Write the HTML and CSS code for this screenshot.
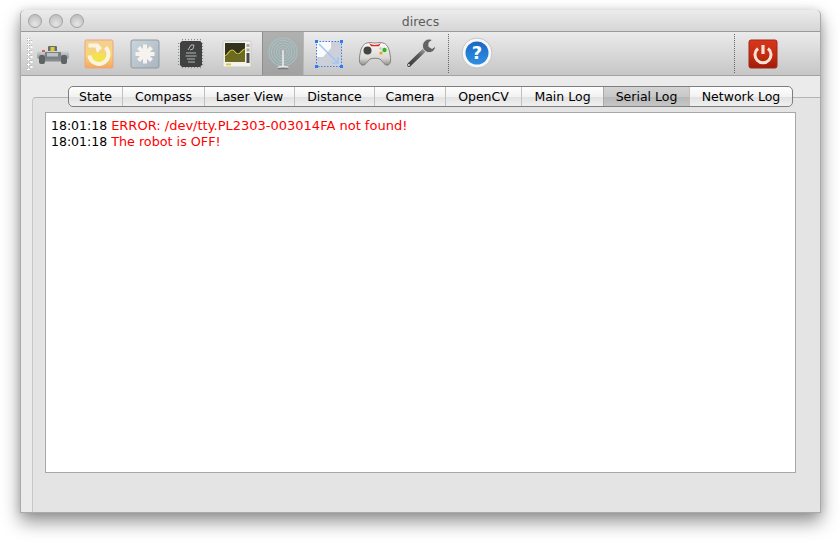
FILE: index.html
```html
<!DOCTYPE html>
<html lang="en">
<head>
<meta charset="utf-8">
<title>direcs</title>
<link rel="stylesheet" href="styles.css">
</head>
<body>
<div class="window">
  <header class="titlebar">
    <div class="lights"><span class="light"></span><span class="light"></span><span class="light"></span></div>
    <div class="title">direcs</div>
  </header>
  <div class="toolbar">
    <div class="grip"></div>
    <div class="tool">
      <svg width="34" height="24" viewBox="0 0 34 24"><defs><linearGradient id="rb" x1="0" y1="0" x2="0" y2="1"><stop offset="0" stop-color="#d4d8db"/><stop offset="1" stop-color="#8b9195"/></linearGradient></defs>
        <rect x="12" y="4" width="9" height="6" rx="1" fill="#6a6d6f"/><rect x="14.500" y="5" width="4" height="4" fill="#e3c92e"/>
        <rect x="1" y="9" width="32" height="8" rx="2" fill="url(#rb)"/><rect x="9" y="10" width="16" height="7" fill="#7c8185"/><rect x="11" y="11" width="11" height="3.500" fill="#bcc1c4"/>
        <rect x="3" y="13" width="6" height="9" rx="2" fill="#5f6366"/><rect x="25" y="13" width="6" height="9" rx="2" fill="#5f6366"/>
        <rect x="6" y="8" width="3" height="2" fill="#d9604a"/><rect x="9" y="17" width="16" height="2.500" fill="#868b8f"/></svg>
    </div>
    <div class="tool">
      <svg width="30" height="30" viewBox="0 0 30 30"><defs><linearGradient id="or" x1="0" y1="0" x2="0" y2="1"><stop offset="0" stop-color="#f4cf96"/><stop offset=".55" stop-color="#f5d672"/><stop offset="1" stop-color="#f4a860"/></linearGradient></defs>
        <rect x="1" y="1" width="28" height="28" rx="1.500" fill="url(#or)" stroke="#eba583"/>
        <ellipse cx="14" cy="20" rx="9" ry="6" fill="#f3e44e"/>
        <path d="M21.500 8.500a9.500 9.500 0 1 1-16 8" fill="none" stroke="#fbf4e2" stroke-width="4"/>
        <path d="M4.500 4.500h9.500l4 4.500-5 5-1.500-5.500H4.500z" fill="#fbf4e2"/></svg>
    </div>
    <div class="tool">
      <svg width="30" height="30" viewBox="0 0 30 30"><defs><linearGradient id="bl" x1="0" y1="0" x2="1" y2="1"><stop offset="0" stop-color="#cbd5dc"/><stop offset="1" stop-color="#a9b5bf"/></linearGradient></defs>
        <rect x="1" y="1" width="28" height="28" rx="2" fill="url(#bl)" stroke="#8f9aa3"/>
        <g stroke="#f6f3ee" stroke-width="4"><path d="M15 5.500v19M5.500 15h19M8.500 8.500l13 13M21.500 8.500l-13 13"/></g><circle cx="15" cy="15" r="4" fill="#f6f3ee"/></svg>
    </div>
    <div class="tool">
      <svg width="28" height="32" viewBox="0 0 28 32"><g stroke="#8c8c8c" stroke-width="1" stroke-dasharray="1.200 .8"><path d="M1 5.500h26M1 8.500h26M1 11.500h26M1 14.500h26M1 17.500h26M1 20.500h26M1 23.500h26M1 26.500h26"/><path d="M5.500 1v30M8.500 1v30M11.500 1v30M14.500 1v30M17.500 1v30M20.500 1v30M23.500 1v30"/></g>
        <path d="M5 3h18l2 2v22l-2 2H5l-2-2V5z" fill="#3f4241"/>
        <g fill="none" stroke="#c4c4c4" stroke-width=".9"><path d="M11 12l3-5h3l-1 4-3 1M9 15h10M8.500 18h11M10 21h8M11 24h7"/></g></svg>
    </div>
    <div class="tool">
      <svg width="30" height="28" viewBox="0 0 30 28"><rect x="1" y="1" width="28" height="26" rx="1.500" fill="#f3f2ec" stroke="#c9c9c5"/>
        <rect x="3" y="3" width="20" height="19" fill="#34321c"/><path d="M3 17c3-1 4-6 7-6s3 4 6 4 3-4 7-5v12H3z" fill="#6d6a22"/><path d="M3 16c3-1 4-6 7-6s3 4 6 4 3-4 7-5" fill="none" stroke="#d4cd3c" stroke-width="1.100"/>
        <rect x="24.500" y="4" width="3" height="3" fill="#a8a8a4"/><rect x="24.500" y="8.500" width="3" height="3" fill="#a8a8a4"/><rect x="24.500" y="13" width="3" height="10" fill="#4a4a48"/><rect x="4" y="23.500" width="5" height="1.800" fill="#d8c92e"/></svg>
    </div>
    <div class="tool active">
      <svg width="32" height="34" viewBox="0 0 32 34"><g fill="none" stroke="#9ecdd0" stroke-width="1.100" opacity=".75"><circle cx="16" cy="15" r="14"/><circle cx="16" cy="15" r="11.500"/><circle cx="16" cy="15" r="9"/><circle cx="16" cy="15" r="6.500"/><circle cx="16" cy="15" r="4"/></g>
        <path d="M15.200 13h1.600v17h-1.600z" fill="#ececec"/><ellipse cx="16" cy="30.500" rx="5.500" ry="1.800" fill="#e9e9e9"/><ellipse cx="16" cy="31.500" rx="5.500" ry="1" fill="#7a7a7a"/></svg>
    </div>
    <div class="tool">
      <svg width="30" height="30" viewBox="0 0 30 30"><rect x="2.500" y="2.500" width="25" height="25" fill="#cdd0d8"/><path d="M2.500 2.500H17V9L9 18H2.500z" fill="#fafafa"/><rect x="2.500" y="2.500" width="25" height="25" fill="none" stroke="#3d7fe0" stroke-dasharray="1.500 1.500"/><path d="M5 5l19 19M24 18v6h-6" fill="none" stroke="#9fc4f5" stroke-width="1.500"/>
        <g fill="#2c7df0"><rect x="1" y="1" width="3" height="3"/><rect x="26" y="1" width="3" height="3"/><rect x="1" y="26" width="3" height="3"/><rect x="26" y="26" width="3" height="3"/></g></svg>
    </div>
    <div class="tool">
      <svg width="34" height="26" viewBox="0 0 34 26"><defs><linearGradient id="gp" x1="0" y1="0" x2="0" y2="1"><stop offset="0" stop-color="#fbfbf9"/><stop offset=".7" stop-color="#d8d7d3"/><stop offset="1" stop-color="#8f8e8a"/></linearGradient></defs>
        <path d="M9 2c3-1 5 0 8 0s5-1 8 0c4 1 6 5 7 11 1 5 1 10-2 11-3 1-5-3-8-6-2-1-8-1-10 0-3 3-5 7-8 6-3-1-3-6-2-11C3 7 5 3 9 2z" fill="url(#gp)" stroke="#6f6e6a" stroke-width=".8"/>
        <path d="M11 1.800c3 3 9 3 12 0l-2 3.500h-8z" fill="#e0281f"/><circle cx="9.500" cy="9.500" r="4" fill="#444"/><circle cx="23" cy="12" r="1.600" fill="#e2a42c"/><circle cx="26.500" cy="9" r="2.200" fill="#2cb81f"/><circle cx="22.500" cy="7.500" r="1.300" fill="#c9c9c5"/></svg>
    </div>
    <div class="tool">
      <svg width="34" height="34" viewBox="0 0 34 34"><defs><linearGradient id="wr" x1="0" y1="1" x2="1" y2="0"><stop offset="0" stop-color="#3f3f3f"/><stop offset=".6" stop-color="#5a5a5a"/><stop offset="1" stop-color="#a8a8a8"/></linearGradient></defs>
        <path d="M21.500 12 5 28" stroke="#e6e6e6" stroke-width="5.200" stroke-linecap="round" fill="none"/><path d="M21.500 12 5 28" stroke="url(#wr)" stroke-width="4" stroke-linecap="round" fill="none"/><circle cx="4.800" cy="28" r="1.100" fill="#ddd"/>
        <path d="M25 2c-4 .5-6.500 3.500-6.500 7 0 1.500.5 3 2 4.500 2 2 4 2.500 6 2 3-.7 5-3 5.200-6.500l-3.700 2.500-3.200-2 .2-4 3.500-2.500C27 2.300 26 1.900 25 2z" fill="#636363" stroke="#e2e2e2" stroke-width=".9"/></svg>
    </div>
    <div class="sep first"></div>
    <div class="tool help">
      <svg width="32" height="33" viewBox="0 0 32 33"><defs><linearGradient id="hb" x1="0" y1="0" x2="0" y2="1"><stop offset="0" stop-color="#1a68c4"/><stop offset="1" stop-color="#2e8fe4"/></linearGradient></defs>
        <circle cx="16" cy="16" r="15" fill="#f7f7f7" stroke="#c4c4c4"/><circle cx="16" cy="16" r="11.500" fill="url(#hb)"/>
        <text x="16" y="22" class="q">?</text></svg>
    </div>
    <div class="spring"></div>
    <div class="sep"></div>
    <div class="tool power">
      <svg width="30" height="30" viewBox="0 0 30 30"><defs><linearGradient id="pw" x1="0" y1="0" x2="0" y2="1"><stop offset="0" stop-color="#d8361c"/><stop offset=".55" stop-color="#c42c10"/><stop offset="1" stop-color="#a01c08"/></linearGradient></defs>
        <rect x="1" y="1" width="28" height="28" rx="2" fill="url(#pw)" stroke="#9c2a1c"/><path d="M10 9.500a8 8 0 1 0 10 0" fill="none" stroke="#f4e4d8" stroke-width="3"/><path d="M15 6v9" stroke="#f4e4d8" stroke-width="3.200"/></svg>
    </div>
  </div>
  <main class="content">
    <section class="frame">
      <nav class="tabs">
        <span class="tab w-state">State</span>
        <span class="tab w-compass">Compass</span>
        <span class="tab w-laser">Laser View</span>
        <span class="tab w-distance">Distance</span>
        <span class="tab w-camera">Camera</span>
        <span class="tab w-opencv">OpenCV</span>
        <span class="tab w-main">Main Log</span>
        <span class="tab w-serial selected">Serial Log</span>
        <span class="tab w-network">Network Log</span>
      </nav>
      <div class="log">
        <div>18:01:18 <span class="err">ERROR: /dev/tty.PL2303-003014FA not found!</span></div>
        <div>18:01:18 <span class="err off">The robot is OFF!</span></div>
      </div>
    </section>
  </main>
</div>
</body>
</html>
```
FILE: styles.css
```css
* { box-sizing: border-box; }
html, body { margin: 0; height: 100%; background: #fff; overflow: hidden; }
body { padding: 10px 19px 0 20px; font-family: "DejaVu Sans", sans-serif; font-size: 12.5px; color: #000; }

.window { width: 801px; height: 503px; display: flex; flex-direction: column; border-radius: 5px 5px 0 0; background: #e4e4e4; box-shadow: 0 9px 18px rgba(0,0,0,.42), 0 0 8px rgba(0,0,0,.12); border: 1px solid #aaa; border-top: 0; }

.titlebar { height: 22px; flex: none; display: flex; align-items: center; position: relative; background: linear-gradient(#ececec, #d6d6d6); border-radius: 5px 5px 0 0; border-bottom: 1px solid #9a9a9a; }
.lights { display: flex; gap: 7px; margin-left: 7px; }
.light { width: 14px; height: 14px; border-radius: 50%; background: radial-gradient(circle at 50% 75%, #e6e6e6, #c4c4c4 70%); border: 1px solid #a2a2a2; }
.title { position: absolute; left: 0; right: 0; margin-top: 1px; text-align: center; color: #5c5c5c; font-size: 12.5px; }

.toolbar { height: 44px; flex: none; display: flex; align-items: center; gap: 4px; padding-left: 11px; background: linear-gradient(#ebebeb, #c6c6c6); border-bottom: 1px solid #a3a3a3; }
.grip { width: 6px; height: 32px; margin-left: -5px; margin-right: -5px; background-image: radial-gradient(circle at 1.5px 1.5px, #fff 1px, #b4b4b4 1.4px, transparent 1.9px), radial-gradient(circle at 4.5px 4px, #fff 1px, #b4b4b4 1.4px, transparent 1.9px); background-size: 6px 5px; }
.tool { width: 42px; height: 43px; flex: none; display: flex; align-items: center; justify-content: center; }
.tool.active { background: linear-gradient(#b0b0b0, #a2a2a2); box-shadow: inset 1px 0 #8e8e8e, inset -1px 0 #b8b8b8; }
.q { font-family: "DejaVu Sans", sans-serif; font-size: 18px; font-weight: 700; fill: #fff; text-anchor: middle; }
.sep { width: 1px; height: 40px; flex: none; background-image: linear-gradient(#666 50%, transparent 50%); background-size: 1px 2px; }
.sep.first { margin-left: 2px; margin-right: 2px; }
.help { width: 34px; margin-left: 5px; }
.spring { flex: 1; }
.power { width: 34px; margin-left: 7px; margin-right: 40px; }

.content { flex: 1; min-height: 0; display: flex; background: #ebebeb; padding: 21px 0 0 11px; }
.frame { flex: 1; min-width: 0; background: #e4e4e4; border-top: 1px solid #b4b4b4; border-left: 1px solid #c8c8c8; border-top-left-radius: 4px; }

.tabs { display: flex; width: 725px; height: 21px; margin: -12px 0 0 35px; background: linear-gradient(#fefefe, #f2f2f2 50%, #e2e2e2 55%, #f0f0f0); border: 1px solid #7e7e7e; border-radius: 5px; }
.tab { display: flex; align-items: center; justify-content: center; flex: none; height: 100%; border-left: 1px solid #c0c0c0; white-space: nowrap; }
.tab:first-child { border-left: 0; }
.w-state { width: 53px; }
.w-compass { width: 82px; }
.w-laser { width: 90px; }
.w-distance { width: 80px; }
.w-camera { width: 71px; }
.w-opencv { width: 76px; }
.w-main { width: 82px; }
.w-serial { width: 86px; }
.w-network { flex: 1; }
.tab.selected { background: linear-gradient(#d4d4d4, #c8c8c8 50%, #b8b8b8 55%, #c6c6c6); border-left-color: #aaa; }

.log { width: 751px; height: 361px; margin: 5px 0 0 12px; padding: 5px 5px; background: #fff; border: 1px solid #a8a8a8; line-height: 16px; }
.err { color: #f00; font-size: 13px; }
.off { font-size: 12.75px; }
```
